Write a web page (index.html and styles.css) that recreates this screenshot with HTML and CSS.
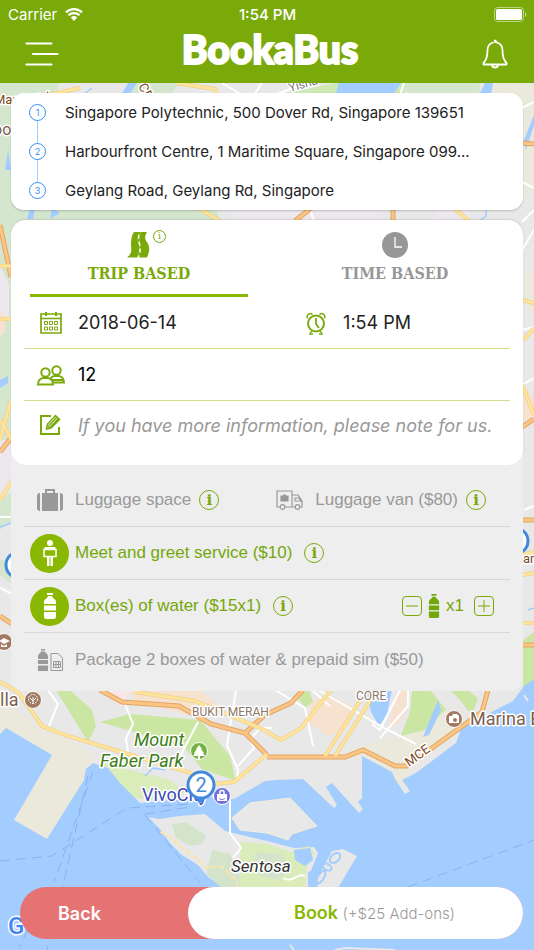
FILE: index.html
```
<!DOCTYPE html>
<html lang="en">
<head>
<meta charset="UTF-8" />
<meta name="viewport" content="width=device-width, initial-scale=1.0" />
<title>BookaBus</title>
<link rel="stylesheet" href="styles.css">
</head>
<body>
<!-- Map -->
<svg class="map" viewBox="0 0 534 950" preserveAspectRatio="xMidYMid slice" aria-hidden="true">
  <rect width="534" height="950" fill="#e8e8e8"/>
  <!-- Districts and parks -->
  <path fill="#d5e6cf" d="M0 83h210l-20 20 30 120H0z M0 220h14v240H0z"/>
  <path fill="#ece8ee" d="M0 265l9 20v35H0z M0 440h12v30l-12 25z M232 208h150v14H228z M440 208h30v14h-40z"/>
  <path fill="#e8e8e8" d="M60 83h70l-10 12H56z M180 83h90l-10 12h-90z"/>
  <path fill="#cfe9b4" d="M276 95l60-12h72l-4 12z M515 130h19v20h-16z"/>
  <path fill="#d5e6cf" d="M400 83h80v12h-70z M0 500l11-8v30l-11 8z M0 560h12v25l-12-10z M523 290l11-5v12h-10z M524 405l10-10v20l-8 3z"/>
  <path fill="#ebe8dc" d="M480 83h54v240l-12-30V208h-50z"/>
  <path fill="#e8e8e8" d="M522 200l12-10v80h-12z"/>
  <path fill="#f6e2cf" d="M0 310l5 8v14l-5 4z M522 380l12 20v20h-12z M310 700l22-4 20 10-8 24-16 6-18-12z M130 690h70l24 20-30 6-60-14z M398 690h10l-6 30-14 10z"/>
  <path fill="#fbe5e8" d="M105 690h26l-10 18z"/>
  <path fill="#cbe6a3" d="M56 690h14l22 20 4 16-8 16-10-16z M100 722l30-8 70 6 10 12 20 24 6 25-34-12-18-22-40-12z M412 690h18l18 22-14 8-18 22-16-4 10-26z M450 690h18l10 8-6 18-12-16z M523 640l11-8v50l-11 6z M297 696l12-6 4 12-8 6z"/>
  <path fill="#d9ecb9" d="M100 762l30 8 40 10 16 12-18 8-36-2-20-16z"/>
  <!-- Sand coloured shore -->
  <path fill="#ebe8dc" d="M0 700l40 26 55 28-9 24-39 61-33-19 38-65-46-27-6 6z M345 750l80-20 20-20 25 10-60 50-12 20-20-24z"/>
  <!-- Sea -->
  <path fill="#a3ccff" d="M0 734l6-6 46 27-38 65 33 19 37-59 2-11 7-6 15 5 12 15 20 20 22-2 34-3 3-8 18 10 17-1 31-18 12-1 26-1 31 29 3-3-11-18 6-4 27 30 4-4-5-7 4-4v-42l30 16 3 7 10 15 5-3-8-11 14-7 40-30 5-14 40-22 12-6 12-16 10-6v274H0z"/>
  <path fill="#a3ccff" d="M8 150l3 20H5z M0 380l8-4v7l-8 5z M128 83h9l-8 12h-8z M335 95l4-12h62l-8 12z M485 83h8l-2 12h-12z M30 209h5l-2 10h-6z M52 208l8 5-10 6z M524 140l10-25v10l-8 25z M366 690h26l-5 24-8 12-8-14z M438 700l3 10-12 25-6 2z"/>
  <path fill="none" stroke="#a3ccff" stroke-width="1.500" d="M0 527l11-4M486 208v8l-8 6M92 88l-8 6M528 610l6-2M145 776l8-8 12 2"/>
  <!-- Islands -->
  <path fill="#e8e8e8" stroke="#f3efd9" d="M232 818l18-15 40-5 27 28-25 8-4 6-21-7-27-3z"/>
  <path fill="#e8e8e8" d="M148 817l12 2 20-3 25-2 20 17 42 10 27 7 20-1 4 6-8 20 8 4 14-26 11-2 14 7-22 37H232l-24-16-10-12-16-10-12-12-10-14z"/>
  <path fill="#d3e4cb" d="M172 824l14-2 20 14-4 8-12 2-14-8z M212 850l18 4 18 40h-20l-22-20z"/>
  <path fill="#d9ecb9" d="M240 842l27 2 24 8 18-6 6 8-8 12-2 26h-65z"/>
  <path fill="#d3e4cb" d="M255 852l25 2 12 14-14 12-22-6z"/>
  <path fill="#a3ccff" d="M294 850l16-2 3 12-8 6-10-6z M308 872l8-4 2 20h-10z"/>
  <g fill="none" stroke="#a3ccff" stroke-width="2">
    <ellipse cx="335" cy="858" rx="6" ry="4" transform="rotate(-40 335 858)"/>
    <ellipse cx="327" cy="867" rx="5" ry="3" transform="rotate(30 327 867)"/>
    <ellipse cx="321" cy="877" rx="7" ry="3" transform="rotate(-60 321 877)"/>
  </g>
  <path fill="none" stroke="#f7e5a9" stroke-width="2" stroke-dasharray="6 2" d="M160 832l12 6 10 10 14 10 10 10 14-2 16 14 2 8"/>
  <path fill="none" stroke="#e8e8e8" stroke-width="2" d="M290 945l4 5M335 950l10-2 50 2M510 700l-2-4M524 695l4 6"/>
  <!-- Ferry routes -->
  <g fill="none" stroke="#85aaf3" stroke-width="1" stroke-dasharray="10 6" opacity="0.800">
    <path d="M0 861l52-5 75-48 64-4"/>
    <path d="M93 772L54 882M88 776L62 890M145 815l55 68M145 814l45-7M408 887l126-47M28 930l-9 17M52 930l-5 20"/>
  </g>
  <!-- Small roads -->
  <g fill="none" stroke="#fff" stroke-width="2">
    <path d="M48 690l10 14-9 22M125 704l8 20-7 14 2 16M236 690l-9 55 11 25-1 12M198 722l-20 38M238 766l16-18-4-8 10-12h12M318 690l70 40 28 14M330 706l-18-16M408 690v16l-28 32M400 690l-20 40-8-6M275 690l30 18 8 38M230 797v36l11 15-8 10M0 517h11M0 588l12 6"/>
    <path d="M222 83l20 12M262 83l-8 12M404 83l-4 12M522 108l12-6M522 182l12 6M522 222l12-12M522 250l12-20M522 385l12-7M524 510l10-4M522 330l12-3M310 209l4 12M275 95l30-12"/>
    <path d="M283 878c10 6 14-6 22-2"/>
  </g>
  <!-- Orange roads -->
  <g fill="none" stroke="#dfa565" stroke-width="5">
    <path d="M100 690l22 12 57 4 32 18 34 9 22 22M267 714l24-11 12-13M245 733l22-20M267 757h78l18-7 32 16 12 0 50-36 25-18 6-22"/>
    <path d="M0 225l11 52M0 452l11-14M0 616l12 8M393 208v13M295 221l16-13M522 143l12 1M522 427l12-8M522 520h12M522 645h12"/>
  </g>
  <g fill="none" stroke="#fcc584" stroke-width="3">
    <path d="M100 690l22 12 57 4 32 18 34 9 22 22M267 714l24-11 12-13M245 733l22-20M267 757h78l18-7 32 16 12 0 50-36 25-18 6-22"/>
    <path d="M0 225l11 52M0 452l11-14M0 616l12 8M393 208v13M295 221l16-13M522 143l12 1M522 427l12-8M522 520h12M522 645h12"/>
  </g>
  <!-- Yellow roads -->
  <g fill="none" stroke="#e9cc83" stroke-width="4">
    <path d="M0 682l18 10 24 34 26 10 120 36 24 12 22-2 33-28 M135 692l60 9 72 30M267 732l14 8 20-12 30-38M325 756l42-66M335 756l42-66"/>
    <path d="M48 95l32-7M175 83l40 6 4 12M200 209l20 12M455 209l14 12M0 319h12M0 266h12M0 440l11-40M0 420l12 20M0 500l11-18M522 300l12 3M524 340l10-12M522 385l12 30M522 555l12-3M522 623h12M522 575l12-2"/>
  </g>
  <g fill="none" stroke="#ffe39a" stroke-width="3">
    <path d="M0 682l18 10 24 34 26 10 120 36 24 12 22-2 33-28 M135 692l60 9 72 30M267 732l14 8 20-12 30-38M325 756l42-66M335 756l42-66"/>
    <path d="M48 95l32-7M175 83l40 6 4 12M200 209l20 12M455 209l14 12M0 319h12M0 266h12M0 440l11-40M0 420l12 20M0 500l11-18M522 300l12 3M524 340l10-12M522 385l12 30M522 555l12-3M522 623h12M522 575l12-2"/>
  </g>
  <!-- Place labels -->
  <g class="map-labels">
    <text x="-6" y="104" font-size="13" fill="#7a4a22">Mar</text>
    <text x="36" y="104" font-size="13" fill="#7a4a22" transform="rotate(-12 36 104)">Rd</text>
    <text x="138" y="86" font-size="13" fill="#7a4a22" transform="rotate(62 138 86)">CE</text>
    <text x="290" y="92" font-size="12" fill="#777" transform="rotate(-16 290 92)">Yishu</text>
    <text x="-7" y="135" font-size="16" fill="#7d5f4d">oo</text>
    <text x="523" y="563" font-size="13" fill="#7a4a22">an</text>
    <text x="0" y="706" font-size="18" fill="#7d5f4d">lla</text>
    <text x="192" y="716" font-size="12" fill="#8d7869">BUKIT MERAH</text>
    <text x="356" y="700" font-size="12" fill="#8d7869">CORE</text>
    <text x="409" y="767" font-size="13" fill="#7a4a22" transform="rotate(-36 409 767)">MCE</text>
    <text x="470" y="725" font-size="18" fill="#7d5f4d">Marina B</text>
    <text x="134" y="746" font-size="18" fill="#3c7d15" font-style="italic">Mount</text>
    <text x="100" y="767" font-size="18" fill="#3c7d15" font-style="italic">Faber Park</text>
    <text x="142" y="801" font-size="18" fill="#3b47b5">VivoCity</text>
    <text x="231" y="872" font-size="17" fill="#333" font-style="italic">Sentosa</text>
    <text x="8" y="934" font-size="24" font-weight="500" fill="#4285f4">G</text>
  </g>
  <!-- Place icons -->
  <g stroke="#fff" stroke-width="1">
    <circle cx="33" cy="700" r="8.500" fill="#a07a63"/>
    <circle cx="4" cy="642" r="8.500" fill="#a07a63"/>
    <circle cx="454" cy="719" r="8.500" fill="#a07a63"/>
    <circle cx="199" cy="751" r="8.500" fill="#74b244"/>
    <circle cx="222" cy="796" r="8.500" fill="#6f70dc"/>
  </g>
  <g fill="#fff">
    <path d="M199 745l3 4h-1l3 4h-1l2 3h-5v3h-2v-3h-5l2-3h-1l3-4h-1z"/>
    <path d="M217 794h10v7h-10z M449 716h3l1-2h4l2 2v7h-10z M-1 641l5-3 6 3-6 3z M1 644l3 2 3-2v3H1z"/>
  </g>
  <g fill="none" stroke="#fff">
    <path d="M220 794v-2c0-2 4-2 4 0v2" stroke-width="1.500"/>
    <circle cx="33" cy="699" r="4.500" stroke-dasharray="2 1"/>
    <path d="M33 697v7M30 698l3 3 3-3"/>
  </g>
  <circle cx="455" cy="720" r="2" fill="#a07a63"/>
  <path d="M219 798c1 2 5 2 6 0" fill="none" stroke="#6f70dc"/>
  <!-- Stop markers -->
  <path d="M192 795h17l-9 9z" fill="#4289dc"/>
  <g fill="#fff" stroke="#4289dc" stroke-width="3">
    <circle cx="201" cy="785" r="13"/>
    <circle cx="19" cy="565" r="13"/>
    <circle cx="515" cy="541" r="13"/>
  </g>
  <text class="marker-text" x="201" y="792" text-anchor="middle">2</text>
</svg>

<div class="app">
  <!-- Header -->
  <header class="header">
    <div class="status-bar">
      <span class="carrier">Carrier
        <svg width="18" height="13" viewBox="0 0 18 13">
          <path d="M9 13L5.800 9.600a4.700 4.700 0 0 1 6.400 0z" fill="#fff"/>
          <path d="M3.500 7.300a8 8 0 0 1 11 0M1 4.400a11.600 11.600 0 0 1 16 0" fill="none" stroke="#fff" stroke-width="2.200"/>
        </svg>
      </span>
      <span class="clock">1:54 PM</span>
      <svg class="battery" width="33" height="15" viewBox="0 0 33 15">
        <rect x="0.500" y="0.500" width="29" height="14" rx="3" fill="none" stroke="#bdd485"/>
        <rect x="2" y="2" width="26" height="11" rx="1.500" fill="#fff"/>
        <path d="M31 5c2 1 2 4 0 5z" fill="#bdd485"/>
      </svg>
    </div>
    <div class="nav">
      <button class="icon-btn" aria-label="Menu">
        <svg width="34" height="26" viewBox="0 0 34 26" fill="none" stroke="#fff" stroke-width="2.200" stroke-linecap="round">
          <path d="M1.500 2.500h25M8 13h24.500M1.500 23.500h25"/>
        </svg>
      </button>
      <h1 class="logo">BookaBus</h1>
      <button class="icon-btn" aria-label="Notifications">
        <svg width="28" height="30" viewBox="0 0 28 30" fill="none" stroke="#fff" stroke-width="1.800" stroke-linecap="round" stroke-linejoin="round">
          <path d="M12 3.500C8 4.500 6.500 8 6.500 11.500c0 6-1 9.500-4 12.500v1.500h23V24c-3-3-4-6.500-4-12.500 0-4-2-7-5.500-8L14 1.500V3M11 26c.5 3.300 5.500 3.300 6 0"/>
        </svg>
      </button>
    </div>
  </header>

  <main class="content">
    <!-- Route -->
    <ol class="route">
      <li class="stop"><span class="stop-number">1</span><span class="stop-name">Singapore Polytechnic, 500 Dover Rd, Singapore 139651</span></li>
      <li class="stop"><span class="stop-number">2</span><span class="stop-name">Harbourfront Centre, 1 Maritime Square, Singapore 099...</span></li>
      <li class="stop"><span class="stop-number">3</span><span class="stop-name">Geylang Road, Geylang Rd, Singapore</span></li>
    </ol>

    <form class="booking" id="booking">
      <div class="card">
        <!-- Tabs -->
        <div class="tabs">
          <button type="button" class="tab active">
            <span class="tab-icon">
              <svg width="24" height="26" viewBox="0 0 24 26">
                <path fill="#7aa90a" d="M7 0h13c-3 5-2 7 .5 11 3 5 1.500 10-.5 14.500H0C6 21 4 17 4 12c0-5 .5-8 3-12z"/>
                <path fill="none" stroke="#fff" stroke-width="1.600" d="M13 0c-2 4-2 8-.5 12 1.500 4 .5 9-1.500 14"/>
                <path fill="none" stroke="#7aa90a" stroke-width="1.600" stroke-dasharray="3 4" d="M13 0c-2 4-2 8-.5 12 1.500 4 .5 9-1.500 14"/>
              </svg>
              <span class="info info-small">i</span>
            </span>
            TRIP BASED
          </button>
          <button type="button" class="tab">
            <span class="tab-icon">
              <svg width="26" height="26" viewBox="0 0 26 26">
                <circle cx="13" cy="13" r="13" fill="#979797"/>
                <path d="M13 5v10h7" fill="none" stroke="#fff" stroke-width="1.300"/>
              </svg>
            </span>
            TIME BASED
          </button>
        </div>

        <!-- Trip details -->
        <div class="field-row when">
          <label class="field">
            <svg class="field-icon" width="30" height="24" viewBox="0 0 30 24" fill="none" stroke="#7aa90a">
              <path d="M5 3h20v19H5zM5 7.500h20" stroke-width="1.700"/>
              <path d="M10 1v4M20 1v4" stroke-width="2"/>
              <path d="M8.500 10.500h3v3h-3zM13.500 10.500h3v3h-3zM18.500 10.500h3v3h-3zM8.500 16h3v3h-3zM13.500 16h3v3h-3zM18.500 16h3v3h-3z"/>
            </svg>
            <input class="field-input" type="text" aria-label="Date" value="2018-06-14">
          </label>
          <label class="field">
            <svg class="field-icon" width="30" height="24" viewBox="0 0 30 24" fill="none" stroke="#7aa90a">
              <circle cx="15" cy="12.500" r="8" stroke-width="2"/>
              <path d="M15 7v6l3 4" stroke-width="1.800"/>
              <path d="M6.500 7.500C5 4 9 1 11.500 3.500M23.500 7.500C25 4 21 1 18.500 3.500M10.500 20l-1.500 3h3M19.500 20l1.500 3h-3" stroke-width="1.400"/>
            </svg>
            <input class="field-input" type="text" aria-label="Time" value="1:54 PM">
          </label>
        </div>
        <div class="field-row">
          <label class="field">
            <svg class="field-icon" width="30" height="24" viewBox="0 0 30 24" fill="#fff" stroke="#7aa90a" stroke-width="2">
              <path d="M14 19.500h14c0-4-2.500-6.500-6-6.500h-3c-3 0-5 2-5 6.500zM16 17h11"/>
              <circle cx="20.500" cy="7.500" r="4.200"/>
              <path d="M2 21.500h15c0-4-2.500-6.500-6-6.500H8c-3.500 0-6 2.500-6 6.500z"/>
              <circle cx="9.500" cy="9.500" r="4.200"/>
            </svg>
            <input class="field-input passengers" type="text" aria-label="Passengers" value="12">
          </label>
        </div>
        <div class="field-row note">
          <label class="field">
            <svg class="field-icon" width="30" height="24" viewBox="0 0 30 24" fill="none" stroke="#7aa90a">
              <path d="M15 3H5v18h18v-7" stroke-width="2"/>
              <path d="M10.500 16l1-5 8-8.500 4 4-8.500 8.500zM13 12.500l7.500-8M14.500 14l7.500-8M11 12l3 3" stroke-width="1.500"/>
            </svg>
            <input class="field-input" type="text" aria-label="Note" placeholder="If you have more information, please note for us.">
          </label>
        </div>
      </div>

      <!-- Add-ons -->
      <div class="addons">
        <div class="addon luggage">
          <div class="addon-item">
            <label class="option">
              <input type="checkbox" class="option-check">
              <span class="option-icon">
                <svg width="26" height="24" viewBox="0 0 26 24" fill="#999">
                  <path d="M3 5v18C1 23 0 22 0 20V8c0-2 1-3 3-3zM23 5v18c2 0 3-1 3-3V8c0-2-1-3-3-3zM5 5h16v18H5z"/>
                  <path d="M9 5V2h8v3" fill="none" stroke="#999" stroke-width="2"/>
                </svg>
              </span>
              Luggage space
            </label>
            <button type="button" class="info" aria-label="About luggage space">i</button>
          </div>
          <div class="addon-item">
            <label class="option">
              <input type="checkbox" class="option-check">
              <span class="option-icon">
                <svg width="27" height="20" viewBox="0 0 27 20" fill="none" stroke="#999" stroke-width="1.200">
                  <path d="M4 17H1V1h15v16H9M16 5h6l4 6v6h-2M19 17h-3M19 8h4l2 3h-6z"/>
                  <circle cx="6.500" cy="17" r="2.300"/>
                  <circle cx="21.500" cy="17" r="2.300"/>
                  <path d="M5 6h7v5H5zM7 5h3" fill="#999"/>
                </svg>
              </span>
              Luggage van ($80)
            </label>
            <button type="button" class="info" aria-label="About luggage van">i</button>
          </div>
        </div>
        <div class="addon">
          <label class="option">
            <input type="checkbox" class="option-check" checked>
            <span class="option-icon">
              <svg width="16" height="28" viewBox="0 0 16 28" fill="#fff">
                <circle cx="8" cy="4" r="3"/>
                <path d="M3 8h10l1 2H2zM5 18h2.500v9H5zM8.500 18H11v9H8.500z"/>
                <path d="M2 10.500h12v7H2z" fill="#8ab800" stroke="#fff" stroke-width="1.500"/>
              </svg>
            </span>
            Meet and greet service ($10)
          </label>
          <button type="button" class="info info-wide" aria-label="About meet and greet">i</button>
        </div>
        <div class="addon">
          <label class="option">
            <input type="checkbox" class="option-check" checked>
            <span class="option-icon">
              <svg width="14" height="26" viewBox="0 0 14 26" fill="#fff">
                <path d="M4 0h6v2H4zM5 3h4c0 2 4 3 4 6v2H1V9c0-3 4-4 4-6zM1 12.500h12v5H1zM1 19h12v5c0 1-1 2-2 2H3c-1 0-2-1-2-2z"/>
              </svg>
            </span>
            Box(es) of water ($15x1)
          </label>
          <button type="button" class="info info-wide" aria-label="About boxes of water">i</button>
          <div class="stepper">
            <button type="button" class="step" id="minus" aria-label="Fewer boxes">
              <svg width="12" height="12" viewBox="0 0 12 12"><path d="M0 6h12" stroke="#7aa90a"/></svg>
            </button>
            <svg width="12" height="24" viewBox="0 0 14 26" preserveAspectRatio="none" fill="#74a80a">
              <path d="M4 0h6v2H4zM5 3h4c0 2 4 3 4 6v2H1V9c0-3 4-4 4-6zM1 12.500h12v5H1zM1 19h12v5c0 1-1 2-2 2H3c-1 0-2-1-2-2z"/>
            </svg>
            <output class="count" id="count">x1</output>
            <button type="button" class="step" id="plus" aria-label="More boxes">
              <svg width="12" height="12" viewBox="0 0 12 12"><path d="M0 6h12M6 0v12" stroke="#7aa90a"/></svg>
            </button>
          </div>
        </div>
        <div class="addon">
          <label class="option">
            <input type="checkbox" class="option-check">
            <span class="option-icon">
              <svg width="26" height="22" viewBox="0 0 26 22" fill="#999">
                <path d="M4 0h4v1.500H4zM4 2.500h4c0 1.500 3 2.500 3 4.500v3H1V7c0-2 3-3 3-4.500zM1 11h10v4H1zM1 16.500h10V22H1z"/>
                <path d="M14 4.500h7l4.500 4.500v12.500H14zM16.500 12.500h7v6h-7zM19 12.500v6M21.500 12.500v6M16.500 15.500h7" fill="none" stroke="#999"/>
              </svg>
            </span>
            Package 2 boxes of water &amp; prepaid sim ($50)
          </label>
        </div>
      </div>
    </form>

    <!-- Actions -->
    <div class="actions">
      <button type="button" class="back">Back</button>
      <button type="submit" form="booking" class="book">Book <span class="extra">(+$25 Add-ons)</span></button>
    </div>
  </main>
</div>

<script>
const count = document.getElementById('count');
let boxes = 1;

document.getElementById('minus').addEventListener('click', () => {
  boxes = Math.max(0, boxes - 1);
  count.textContent = 'x' + boxes;
});

document.getElementById('plus').addEventListener('click', () => {
  boxes++;
  count.textContent = 'x' + boxes;
});
</script>
</body>
</html>
```
FILE: styles.css
```
* {
  box-sizing: border-box;
  margin: 0;
  padding: 0;
}
body {
  position: relative;
  font-family: 'Inter', sans-serif;
  color: #222;
}
button, input {
  font: inherit;
  color: inherit;
  background: none;
  border: none;
}
button {
  cursor: pointer;
}
svg {
  flex-shrink: 0;
}

/* Map behind the page */
.map {
  position: absolute;
  top: 0;
  left: 0;
  width: 100%;
  height: 100%;
}
.map-labels {
  font-family: 'Roboto', sans-serif;
  stroke: #fff;
  stroke-width: 3px;
  stroke-linejoin: round;
  paint-order: stroke;
}
.marker-text {
  font-family: 'Roboto', sans-serif;
  font-size: 20px;
  fill: #4289dc;
}
.app {
  position: relative;
  display: flex;
  flex-direction: column;
  min-height: 100vh;
}

/* Header */
.header {
  background: #7aa90a;
  color: #fff;
}
.status-bar {
  display: grid;
  grid-template-columns: 1fr auto 1fr;
  align-items: center;
  height: 28px;
  padding: 0 7px 0 8px;
  font-size: 15px;
}
.carrier {
  display: flex;
  align-items: center;
  gap: 8px;
}
.clock {
  font-weight: 500;
}
.battery {
  justify-self: end;
}
.nav {
  display: flex;
  align-items: center;
  justify-content: space-between;
  height: 55px;
  padding: 0 25px 3px;
}
.icon-btn {
  display: flex;
}
.logo {
  font-family: 'Lato', sans-serif;
  font-size: 39px;
  font-weight: 900;
  line-height: 40px;
  padding-bottom: 10px;
  -webkit-text-stroke: 2px #fff;
}

/* Route */
.content {
  flex: 1;
  display: flex;
  flex-direction: column;
  padding: 10px 11px 11px;
}
.route {
  list-style: none;
  background: #fff;
  border-radius: 13px;
  box-shadow: 0 1px 2px rgba(0,0,0,0.2);
  margin-bottom: 10px;
}
.stop {
  display: flex;
  align-items: center;
  height: 39px;
  padding: 0 40px 0 18px;
  font-size: 15px;
  background: linear-gradient(#a3ccf8, #a3ccf8) 26px 0 / 1px 100% no-repeat;
}
.stop:first-child {
  background-position: 26px 100%;
  background-size: 1px 50%;
}
.stop:last-child {
  background-size: 1px 50%;
}
.stop-number {
  flex-shrink: 0;
  width: 17px;
  margin-right: 19px;
  border: 1px solid #3690f5;
  border-radius: 50%;
  background: #fff;
  color: #3690f5;
  font-size: 9px;
  line-height: 15px;
  text-align: center;
}
.stop-name {
  overflow: hidden;
  text-overflow: ellipsis;
  white-space: nowrap;
}

/* Booking form */
.booking {
  background: #eee;
  border-radius: 15px 15px 12px 12px;
}
.card {
  background: #fff;
  border-radius: 15px;
  box-shadow: 0 -1px 2px rgba(0,0,0,0.1);
}
.tabs {
  display: grid;
  grid-template-columns: 1fr 1fr;
}
.tab {
  display: flex;
  flex-direction: column;
  align-items: center;
  gap: 4px;
  height: 77px;
  margin: 0 19px;
  padding-top: 12px;
  border-bottom: 3px solid transparent;
  font-family: 'DejaVu Serif Condensed', 'DejaVu Serif', serif;
  font-size: 16px;
  font-weight: bold;
  line-height: 24px;
  color: #979797;
}
.tab.active {
  color: #7aa90a;
  border-color: #8ab800;
}
.tab-icon {
  position: relative;
  display: flex;
}
.field-row {
  display: grid;
  align-items: center;
  height: 52px;
  margin: 0 13px;
  border-bottom: 1px solid #cfe08c;
}
.field-row.when {
  grid-template-columns: minmax(0, 6fr) minmax(0, 5fr);
}
.field-row.note {
  height: 64px;
  padding-bottom: 16px;
  border-bottom: none;
}
.field {
  display: flex;
  align-items: center;
  gap: 12px;
  padding-left: 12px;
}
.field-icon {
  width: 30px;
}
.field-input {
  flex: 1;
  min-width: 0;
  font-size: 18px;
  outline: none;
}
.field-input::placeholder {
  font-style: italic;
  color: #999;
}
.passengers {
  color: #000;
}

/* Add-ons */
.addons {
  padding: 9px 13px 5px;
  font-family: 'Liberation Sans', sans-serif;
  font-size: 17px;
  color: #999;
}
.addon {
  display: flex;
  align-items: center;
  height: 53px;
  border-bottom: 1px solid #d8d8d8;
}
.addon:last-child {
  border-bottom: none;
}
.luggage {
  justify-content: space-between;
  padding-right: 24px;
}
.addon-item {
  display: flex;
  align-items: center;
}
.option {
  position: relative;
  display: flex;
  align-items: center;
  gap: 6px;
  padding-left: 6px;
  cursor: pointer;
}
.option-check {
  position: absolute;
  opacity: 0;
}
.option-icon {
  display: flex;
  align-items: center;
  justify-content: center;
  width: 39px;
  height: 39px;
  border-radius: 50%;
}
.option-check:checked + .option-icon {
  background: #8ab800;
}
.option:has(:checked) {
  color: #74a80a;
}
.info {
  flex-shrink: 0;
  width: 20px;
  height: 20px;
  margin-left: 8px;
  border: 1px solid #7aa90a;
  border-radius: 50%;
  color: #7aa90a;
  font-family: 'DejaVu Serif', serif;
  font-size: 15px;
  font-weight: bold;
  line-height: 18px;
  text-align: center;
}
.info-wide {
  margin-left: 12px;
}
.info-small {
  position: absolute;
  top: -2px;
  left: 26px;
  width: 13px;
  height: 13px;
  margin: 0;
  font-size: 9px;
  font-weight: normal;
  line-height: 11px;
}
.stepper {
  display: flex;
  align-items: center;
  gap: 6px;
  margin-left: auto;
  padding-right: 16px;
  color: #74a80a;
}
.step {
  display: flex;
  align-items: center;
  justify-content: center;
  width: 20px;
  height: 20px;
  border: 1px solid #7aa90a;
  border-radius: 4px;
}
.count {
  margin-right: 4px;
}

/* Actions */
.actions {
  display: flex;
  margin: auto 0 0 9px;
  border-radius: 26px;
  background: #e57373;
  font-size: 18px;
  font-weight: 600;
  line-height: 51px;
}
.back {
  flex: 1;
  padding-left: 38px;
  color: #fff;
  text-align: left;
}
.book {
  width: 66.6%;
  padding-left: 38px;
  border-radius: 26px;
  background: #fff;
  color: #8ab800;
}
.extra {
  font-size: 15px;
  font-weight: 300;
  color: #999;
}
```
